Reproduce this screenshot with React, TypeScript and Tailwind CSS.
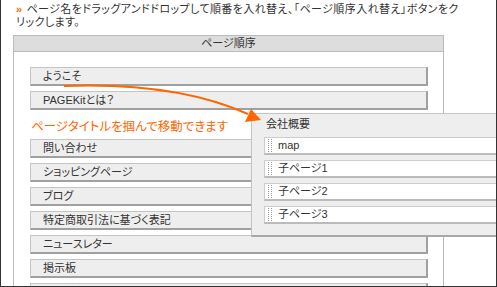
import React from 'react';

const pages = ['問い合わせ', 'ショッピングページ', 'ブログ', '特定商取引法に基づく表記', 'ニュースレター', '掲示板', 'カテゴリー'];
const children = ['map', '子ページ1', '子ページ2', '子ページ3'];

const font = "font-['Liberation_Sans','Noto_Sans_CJK_JP',sans-serif] [font-feature-settings:'palt']";

function Item({ label }: { label: string }) {
  return (
    <div className="h-[19px] mb-[5px] bg-[#eeeeee] border border-[#c4c4c4] border-b-2 border-r-2 border-b-[#a0a0a0] border-r-[#a0a0a0] pl-[12px] text-[11px] leading-[16px] text-[#333]">
      {label}
    </div>
  );
}

function Handle() {
  return (
    <span className="flex gap-[2px] h-[13px] mr-[6px] shrink-0">
      <span className="w-0 border-l border-dotted border-[#999]" />
      <span className="w-0 border-l border-dotted border-[#999]" />
    </span>
  );
}

export default function App() {
  return (
    <div className={`relative w-[497px] h-[287px] overflow-hidden bg-white border-l border-r border-b border-[#333] ${font}`}>
      <p className="pl-[15px] pt-[3px] text-[11px] leading-[13px] text-[#333] tracking-[0.4px]">
        <span className="text-[#ff6600] font-bold mr-[4px]">»</span>
        ページ名をドラッグアンドドロップして順番を入れ替え、「ページ順序入れ替え」ボタンをク
        <br />
        リックします。
      </p>

      <div className="ml-[12px] mt-[6px] w-[431px] border border-[#bbbbbb] border-b-0 bg-white">
        <div className="h-[16px] bg-[#dddddd] border-b border-[#bbbbbb] text-center text-[11px] leading-[15px] text-[#333]">
          ページ順序
        </div>
        <div className="pt-[15px] pl-[16px] pr-[15px]">
          <Item label="ようこそ" />
          <Item label="PAGEKitとは？" />
          <div className="h-[24px] text-[12.5px] leading-[24px] text-[#ff6600] pl-[1px]">
            ページタイトルを掴んで移動できます
          </div>
          {pages.map((p) => (
            <Item key={p} label={p} />
          ))}
        </div>
      </div>

      {/* dragged item */}
      <div className="absolute left-[250px] top-[113px] w-[270px] h-[124px] bg-[#eeeeee] border border-[#c4c4c4] border-b-2 border-b-[#a8a8a8] pl-[12px] pt-[3px]">
        <div className="text-[11px] leading-[15px] text-[#333] pl-[2px]">会社概要</div>
        <div className="mt-[5px]">
          {children.map((c) => (
            <div
              key={c}
              className="flex items-center h-[18px] mb-[5px] bg-white border border-[#cccccc] border-b-2 border-b-[#bbbbbb] pl-[3px] text-[11px] text-[#333]"
            >
              <Handle />
              {c}
            </div>
          ))}
        </div>
      </div>

      {/* arrow */}
      <svg className="absolute left-0 top-0 pointer-events-none" width="497" height="287">
        <path d="M63 86 Q175 82 247 114" fill="none" stroke="#ff6600" strokeWidth="2" />
        <polygon points="260,120 244,122 250,109" fill="#ff6600" />
      </svg>
    </div>
  );
}
